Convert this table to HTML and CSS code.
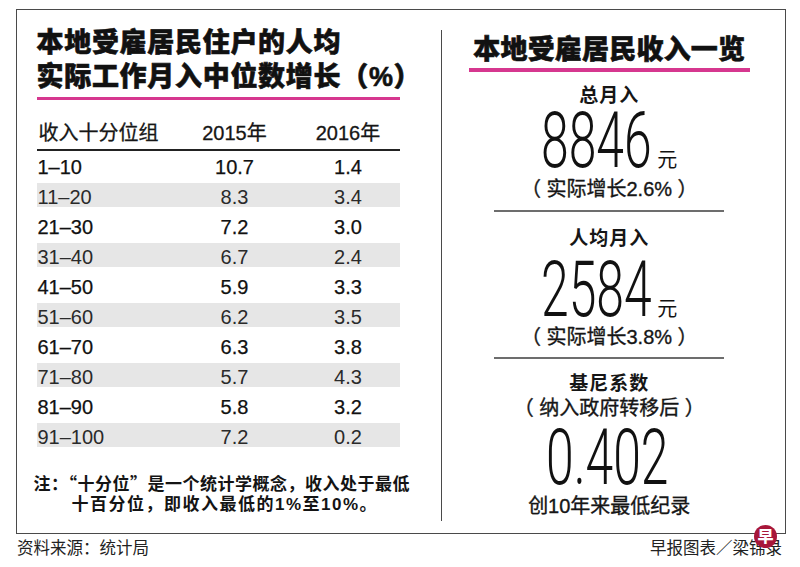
FILE: index.html
```html
<!DOCTYPE html>
<html lang="zh-CN">
<head>
<meta charset="utf-8">
<title>本地受雇居民收入</title>
<link rel="stylesheet" href="styles.css">
</head>
<body>
<div class="page">
  <div class="frame">
    <section class="left">
      <h1 class="title">本地受雇居民住户的人均<br>实际工作月入中位数增长（%）</h1>
      <div class="rule"></div>
      <div class="thead"><span>收入十分位组</span><span>2015年</span><span>2016年</span></div>
      <div class="tbody">
        <div class="row"><span>1–10</span><span>10.7</span><span>1.4</span></div>
        <div class="row alt"><span>11–20</span><span>8.3</span><span>3.4</span></div>
        <div class="row"><span>21–30</span><span>7.2</span><span>3.0</span></div>
        <div class="row alt"><span>31–40</span><span>6.7</span><span>2.4</span></div>
        <div class="row"><span>41–50</span><span>5.9</span><span>3.3</span></div>
        <div class="row alt"><span>51–60</span><span>6.2</span><span>3.5</span></div>
        <div class="row"><span>61–70</span><span>6.3</span><span>3.8</span></div>
        <div class="row alt"><span>71–80</span><span>5.7</span><span>4.3</span></div>
        <div class="row"><span>81–90</span><span>5.8</span><span>3.2</span></div>
        <div class="row alt"><span>91–100</span><span>7.2</span><span>0.2</span></div>
      </div>
      <p class="note">注：<span class="q">“</span>十分位<span class="q">”</span>是一个统计学概念，收入处于最低<br><span class="note-2">十百分位，即收入最低的1%至10%。</span></p>
    </section>
    <section class="right">
      <h2 class="title rtitle">本地受雇居民收入一览</h2>
      <div class="rrule"></div>
      <div class="label l1">总月入</div>
      <div class="figure f1"><span class="num"><span>8846</span></span><span class="unit">元</span></div>
      <div class="sub s1">（ 实际增长2.6% ）</div>
      <div class="divider d1"></div>
      <div class="label l2">人均月入</div>
      <div class="figure f2"><span class="num"><span>2584</span></span><span class="unit">元</span></div>
      <div class="sub s2">（ 实际增长3.8% ）</div>
      <div class="divider d2"></div>
      <div class="label l3">基尼系数</div>
      <div class="sub s3">（ 纳入政府转移后 ）</div>
      <div class="figure f3"><span class="num wide"><span>0.402</span></span></div>
      <div class="sub s4">创10年来最低纪录</div>
    </section>
  </div>
  <footer class="footer">
    <span>资料来源：统计局</span>
    <span>早报图表／梁锦录</span>
    <span class="logo">早</span>
  </footer>
</div>
</body>
</html>
```

FILE: styles.css
```css
html, body {
  margin: 0;
  padding: 0;
  background: #ffffff;
}

body {
  font-family: "Liberation Sans", "Noto Sans CJK SC", sans-serif;
  color: #161616;
}

.page {
  width: 800px;
  height: 567px;
  overflow: hidden;
}

.frame {
  margin: 9px 0 0 16px;
  width: 770px;
  height: 525px;
  box-sizing: border-box;
  border: 1.5px solid #4a4a4a;
  display: grid;
  grid-template-columns: 423.5px 1fr;
}

/* ---------- left ---------- */
.left {
  padding: 16px 0 0 19.5px;
}

.title {
  margin: 0;
  font-size: 27px;
  line-height: 34px;
  font-weight: 900;
  letter-spacing: 0.2px;
  color: #111111;
  white-space: nowrap;
  -webkit-text-stroke: 0.6px #111111;
}

.left .title {
  letter-spacing: 0.7px;
}

.rule {
  width: 363px;
  height: 3px;
  margin-top: 2.5px;
  background: #d6378f;
}

.thead,
.row {
  display: grid;
  grid-template-columns: 136px 124px 103px;
  width: 363px;
  font-size: 20px;
}

.thead {
  margin-top: 21.5px;
  line-height: 24px;
  padding-bottom: 4px;
  border-bottom: 2px solid #222222;
  -webkit-text-stroke: 0.3px #161616;
}

.thead span,
.row span {
  text-align: center;
}

.thead span:first-child {
  text-align: left;
  padding-left: 2px;
}

.row span:first-child {
  text-align: left;
  padding-left: 1px;
}

.tbody {
  display: flex;
  flex-direction: column;
  gap: 6px;
  margin-top: 1.5px;
}

.row {
  height: 24px;
  box-sizing: border-box;
  padding-top: 5px;
  line-height: 19px;
  color: #111111;
  -webkit-text-stroke: 0.25px #111111;
}

.row.alt {
  background: #e6e6e6;
  color: #2a2a2a;
  -webkit-text-stroke: 0;
}

.note {
  margin: 26px 0 0 -3px;
  font-size: 17px;
  line-height: 20.5px;
  font-weight: 700;
  letter-spacing: 0.5px;
  padding-left: 38px;
  text-indent: -38px;
  white-space: nowrap;
  color: #141414;
}

.note-2 {
  letter-spacing: 1.5px;
}

.q {
  font-family: "Noto Sans CJK SC", sans-serif;
}

/* ---------- right ---------- */
.right {
  margin: 20px 0 12px;
  border-left: 1.5px solid #4a4a4a;
  padding-right: 8px;
  text-align: center;
}

.rtitle {
  margin-top: 2.5px;
}

.rrule {
  width: 281px;
  height: 4px;
  margin: 1px auto 0;
  background: #d6378f;
}

.label {
  font-size: 19px;
  line-height: 22px;
  font-weight: 700;
  letter-spacing: 1px;
}

.figure {
  font-family: "Roboto", "Liberation Sans", sans-serif;
  font-weight: 300;
  font-size: 77px;
  line-height: 60px;
  white-space: nowrap;
  color: #111111;
}

.num {
  display: inline-block;
  width: 114px;
  text-align: left;
}

.num.wide {
  width: 127px;
}

.num span {
  display: inline-block;
  transform: scaleX(0.647);
  transform-origin: 0 50%;
}

.unit {
  font-family: "Liberation Sans", "Noto Sans CJK SC", sans-serif;
  font-size: 20px;
  line-height: 1;
  font-weight: 400;
  margin-left: 2px;
}

.sub {
  font-size: 20px;
  line-height: 22px;
  white-space: nowrap;
  -webkit-text-stroke: 0.35px #161616;
}

.divider {
  width: 230px;
  height: 2px;
  margin: 0 auto;
  background: #6d6d6d;
}

.l1 { margin-top: 13px; }
.f1 { margin-top: 4.3px; }
.s1 { margin-top: 7.7px; }
.d1 { margin-top: 10px; }
.l2 { margin-top: 15.5px; }
.f2 { margin-top: 9.8px; }
.s2 { margin-top: 6.2px; }
.d2 { margin-top: 9.5px; }
.l3 { margin-top: 14px; }
.s3 { margin-top: 2px; }
.f3 { margin-top: 8.3px; }
.s4 { margin-top: 7.2px; }

/* ---------- footer ---------- */
.footer {
  position: relative;
  width: 770px;
  margin: 3.5px 0 0 16px;
  box-sizing: border-box;
  padding: 0 4px 0 1px;
  display: flex;
  justify-content: space-between;
  font-size: 16.5px;
  line-height: 20px;
  color: #222222;
}

.logo {
  position: absolute;
  right: 9px;
  top: -12.5px;
  width: 23px;
  height: 23px;
  border-radius: 50%;
  background: #a8173a;
  color: #ffffff;
  font-size: 16px;
  font-weight: 900;
  line-height: 23px;
  text-align: center;
}
```
